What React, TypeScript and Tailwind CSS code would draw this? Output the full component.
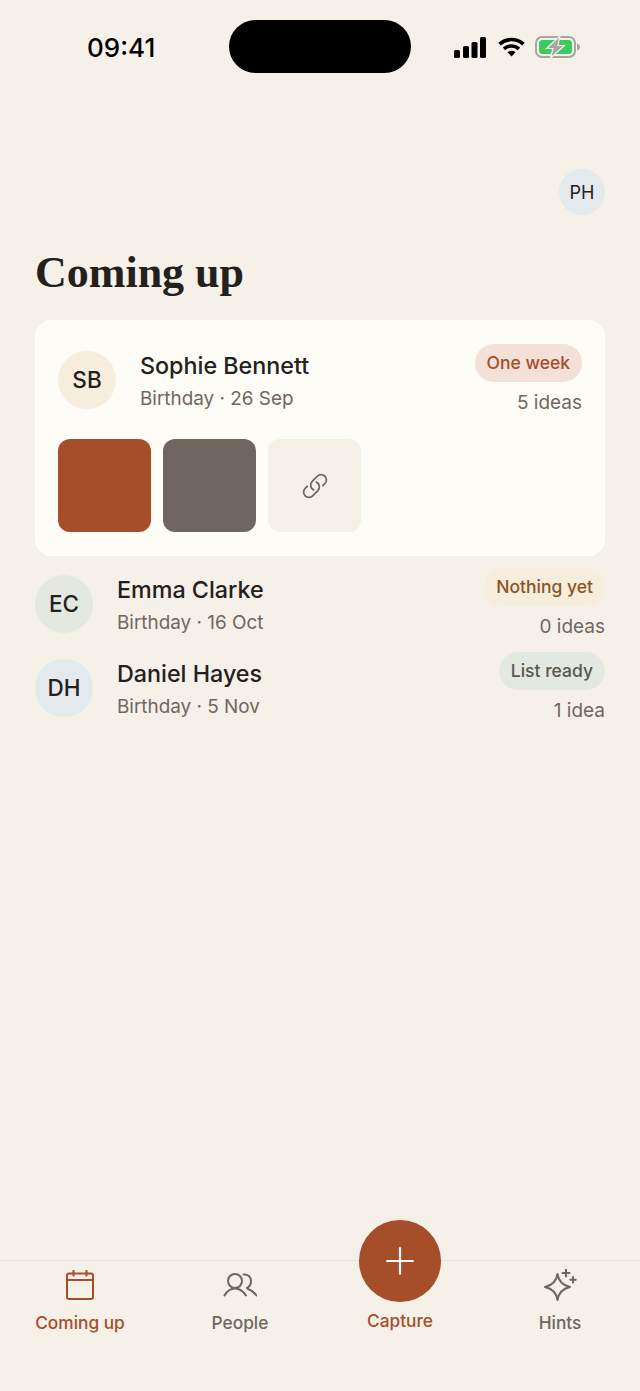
import { Plus } from "lucide-react"

const others = [
  { initials: "EC", name: "Emma Clarke", date: "Birthday · 16 Oct", badge: "Nothing yet", ideas: "0 ideas", avatar: "bg-[#e3e9e0]", pill: "bg-[#f7eddc] text-[#8a5426]" },
  { initials: "DH", name: "Daniel Hayes", date: "Birthday · 5 Nov", badge: "List ready", ideas: "1 idea", avatar: "bg-[#e3e9ed]", pill: "bg-[#e3e9e0] text-[#59554e]" },
]

function StatusBar() {
  return (
    <div className="flex h-[95px] shrink-0 items-start pt-5">
      <div className="w-[229px] pt-[10px] pl-[87px] text-[26px] leading-[35px] font-medium text-black">09:41</div>
      <div className="h-[53px] w-[182px] rounded-[27px] bg-black" />
      <div className="flex items-center pt-[16px] pl-[43px]">
        <svg width="32" height="21" viewBox="0 0 32 21" fill="#000">
          <rect x="0" y="13" width="6" height="8" rx="1.5" />
          <rect x="9" y="9" width="6" height="12" rx="1.5" />
          <rect x="17.5" y="5" width="6" height="16" rx="1.5" />
          <rect x="26" y="0" width="6" height="21" rx="1.5" />
        </svg>
        <svg className="ml-3" width="27" height="20" viewBox="0 0 27 20" fill="none" stroke="#000" strokeWidth="3.6">
          <path d="M1.5 7.2C8.5 1 18.5 1 25.5 7.2" />
          <path d="M6 11.8C10.5 8 16.5 8 21 11.8" />
          <path d="M13.5 19.5l-4-4.3c2.4-1.8 5.6-1.8 8 0z" fill="#000" stroke="none" />
        </svg>
        <svg className="ml-[10px]" width="46" height="22" viewBox="0 0 46 22" fill="none">
          <rect x="1" y="1" width="39" height="20" rx="6" stroke="#a9a69f" strokeWidth="2" />
          <rect x="4" y="4" width="33" height="14" rx="3.5" fill="#3ccb62" />
          <path d="M42 7.5c2 .5 3 1.8 3 3.5s-1 3-3 3.5z" fill="#a9a69f" />
          <path d="M25 0 11.500 12.500h6.500L15.500 22l14-12.500H23z" fill="#a9a69f" stroke="#f5f1e9" strokeWidth="1.2" />
        </svg>
      </div>
    </div>
  )
}

function CalendarIcon() {
  return (
    <svg width="28" height="30" viewBox="0 0 28 30" fill="none" stroke="currentColor" strokeWidth="2">
      <rect x="1" y="3.5" width="26" height="25.5" rx="2" />
      <path d="M1 10h26M7.5 0v6.5M20.5 0v6.5" />
    </svg>
  )
}

function PeopleIcon() {
  return (
    <svg width="34" height="24" viewBox="0 0 34 24" fill="none" stroke="currentColor" strokeWidth="2" strokeLinecap="round">
      <circle cx="12" cy="8" r="7" />
      <path d="M1.5 22.5C4 18 8 15.5 12 15.5s8 2.5 11 7" />
      <path d="M20.5 1.5C25 1 28 4 28 8c0 3-2 6-4 7" />
      <path d="M25 16c3 1 6 3 8.5 6.5" />
    </svg>
  )
}

function HintsIcon() {
  return (
    <svg width="34" height="32" viewBox="0 0 34 32" fill="none" stroke="currentColor" strokeWidth="2" strokeLinecap="round" strokeLinejoin="round">
      <path d="M14.5 5Q16 15.5 27 18 16 20.5 14.5 31 13 20.5 2 18 13 15.5 14.5 5z" />
      <path d="M23 0.5v7M19.5 4h7M30 8v5.4M27.3 10.7h5.4" />
    </svg>
  )
}

export default function App() {
  return (
    <div className="flex h-[1391px] w-[640px] flex-col overflow-hidden bg-[#f5f1e9] font-['Inter',sans-serif] text-[#24201c]">
      <StatusBar />

      <div className="flex-1 px-[35px]">
        <div className="flex justify-end pt-[74px]">
          <div className="flex h-[46px] w-[46px] items-center justify-center rounded-full bg-[#e3e9ed] text-[18px]">PH</div>
        </div>
        <h1 className="mt-[30px] font-['Liberation_Serif',serif] text-[44px] leading-[56px] font-bold">Coming up</h1>

        <div className="mt-[19px] h-[236px] rounded-[16px] bg-[#fdfcf7] px-[23px] pt-6">
          <div className="flex items-start justify-between">
            <div className="flex items-start gap-6">
              <div className="mt-[7px] flex h-[58px] w-[58px] items-center justify-center rounded-full bg-[#f7eddc] text-[22.5px] font-medium">SB</div>
              <div className="mt-[6px]">
                <p className="text-[23.3px] leading-[32px] font-medium">Sophie Bennett</p>
                <p className="mt-px text-[18.9px] leading-[32px] text-[#6f675f]">Birthday · 26 Sep</p>
              </div>
            </div>
            <div className="flex flex-col items-end">
              <span className="flex h-[38px] items-center rounded-full bg-[#f3e0d6] px-3 text-[17.5px] font-medium text-[#a64d2a]">One week</span>
              <span className="mt-2 text-[19px] leading-[26px] text-[#6f675f]">5 ideas</span>
            </div>
          </div>
          <div className="mt-[23px] flex gap-3">
            <div className="h-[93px] w-[93px] rounded-[12px] bg-[#a64d2a]" />
            <div className="h-[93px] w-[93px] rounded-[12px] bg-[#6f675f]" />
            <div className="flex h-[93px] w-[93px] items-center justify-center rounded-[12px] bg-[#f5f1e9] text-[#6f675f]">
              <svg width="28" height="28" viewBox="0 0 24 24" fill="none" stroke="currentColor" strokeWidth="1.5" strokeLinecap="round" strokeLinejoin="round">
                <path d="M13.19 8.688a4.5 4.5 0 0 1 1.242 7.244l-4.5 4.5a4.5 4.5 0 0 1-6.364-6.364l1.757-1.757m13.35-.622 1.757-1.757a4.5 4.5 0 0 0-6.364-6.364l-4.5 4.5a4.5 4.5 0 0 0 1.242 7.244" />
              </svg>
            </div>
          </div>
        </div>

        <div className="mt-3">
          {others.map((p) => (
            <div key={p.name} className="flex h-[84px] items-start justify-between">
              <div className="flex items-start gap-6">
                <div className={`mt-[7px] flex h-[58px] w-[58px] items-center justify-center rounded-full text-[22.5px] font-medium ${p.avatar}`}>{p.initials}</div>
                <div className="mt-[6px]">
                  <p className="text-[23.3px] leading-[32px] font-medium">{p.name}</p>
                  <p className="mt-px text-[18.9px] leading-[32px] text-[#6f675f]">{p.date}</p>
                </div>
              </div>
              <div className="flex flex-col items-end">
                <span className={`flex h-[38px] items-center rounded-full px-3 text-[17.5px] font-medium ${p.pill}`}>{p.badge}</span>
                <span className="mt-2 text-[19px] leading-[26px] text-[#6f675f]">{p.ideas}</span>
              </div>
            </div>
          ))}
        </div>
      </div>

      <nav className="grid h-[131px] shrink-0 grid-cols-4 border-t border-[#e6e2db]">
        <div className="flex flex-col items-center pt-[9px] text-[#a64d2a]">
          <CalendarIcon />
          <span className="mt-[9px] text-[17.3px] leading-[28px] font-medium">Coming up</span>
        </div>
        <div className="flex flex-col items-center pt-[12px] text-[#6f675f]">
          <PeopleIcon />
          <span className="mt-[12px] text-[17.3px] leading-[28px] font-medium">People</span>
        </div>
        <div className="flex flex-col items-center text-[#a64d2a]">
          <div className="-mt-[41px] flex h-[82px] w-[82px] items-center justify-center rounded-full bg-[#a64d2a] text-white">
            <Plus size={44} strokeWidth={1.2} />
          </div>
          <span className="mt-[5px] text-[17.3px] leading-[28px] font-medium">Capture</span>
        </div>
        <div className="flex flex-col items-center pt-[8px] text-[#6f675f]">
          <HintsIcon />
          <span className="mt-[8px] text-[17.3px] leading-[28px] font-medium">Hints</span>
        </div>
      </nav>
    </div>
  )
}
